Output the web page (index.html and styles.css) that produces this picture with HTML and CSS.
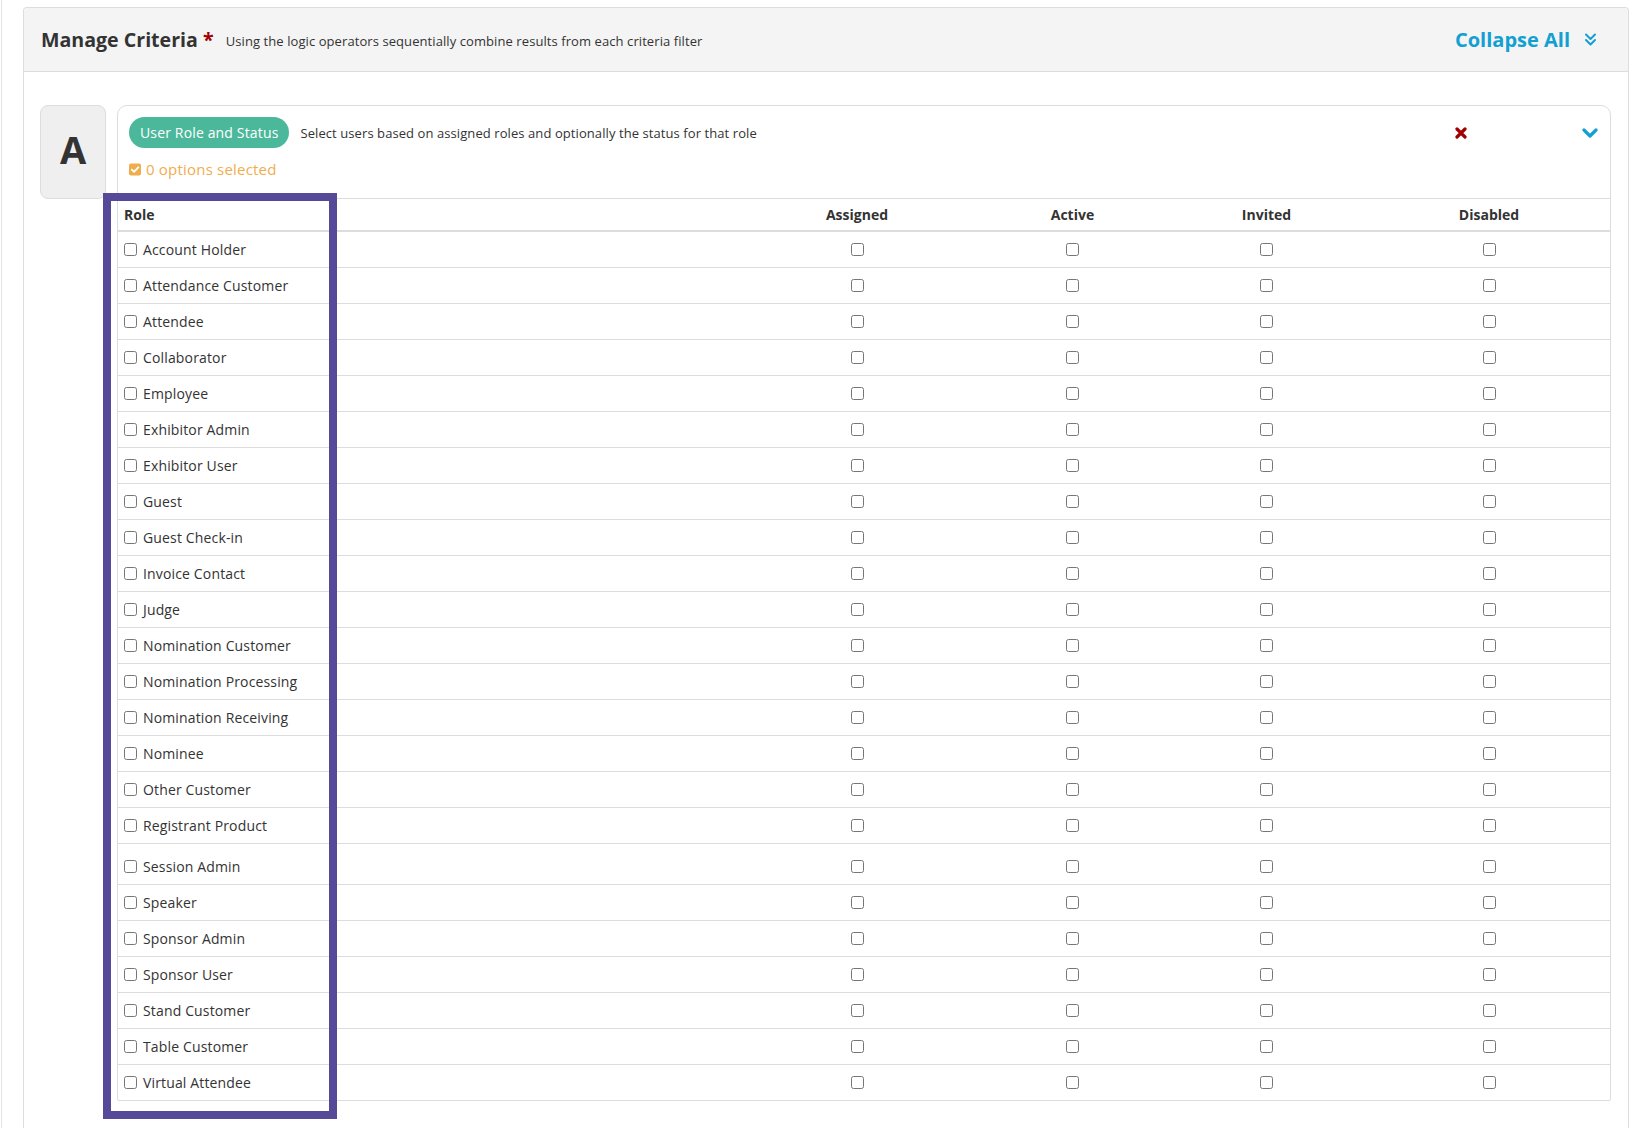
FILE: index.html
```html
<!DOCTYPE html>
<html lang="en">
  <head>
    <meta charset="UTF-8" />
    <meta name="viewport" content="width=device-width, initial-scale=1.0" />
    <title>Manage Criteria</title>
    <link rel="stylesheet" href="styles.css">
  </head>
  <body>
    <div class="frame">
      <div class="panel">
        <div class="panel-head">
          <h2 class="title">Manage Criteria <span class="req">*</span></h2>
          <span class="subtitle">Using the logic operators sequentially combine results from each criteria filter</span>
          <a class="collapse-all">Collapse All
            <svg width="13" height="13" viewBox="0 0 13 13"><path d="M2 1.5 L6.5 6 L11 1.5 M2 7 L6.5 11.5 L11 7" fill="none" stroke="#129fd2" stroke-width="2" stroke-linecap="round" stroke-linejoin="round"/></svg>
          </a>
        </div>

        <div class="panel-body">
          <div class="criteria">
            <div class="letter">A</div>
            <div class="card">
              <div class="card-head">
                <div class="card-top">
                  <span class="pill">User Role and Status</span>
                  <span class="desc">Select users based on assigned roles and optionally the status for that role</span>
                  <span class="remove">
                    <svg width="12" height="12" viewBox="0 0 12 12"><path d="M2 2 L10 10 M10 2 L2 10" stroke="#a10000" stroke-width="3.2" stroke-linecap="round"/></svg>
                  </span>
                  <span class="toggle">
                    <svg width="16" height="10" viewBox="0 0 16 10"><path d="M2 2 L8 8 L14 2" fill="none" stroke="#129fd2" stroke-width="3.2" stroke-linecap="round" stroke-linejoin="round"/></svg>
                  </span>
                </div>
                <div class="selected">
                  <svg width="12" height="13" viewBox="0 0 12 13"><rect x="0" y="0.5" width="12" height="12" rx="2" fill="#f0ad4e"/><path d="M2.8 6.6 L5 8.8 L9.3 4.3" fill="none" stroke="#fff" stroke-width="1.8" stroke-linecap="round" stroke-linejoin="round"/></svg>
                  0 options selected
                </div>
              </div>

              <table class="roles">
                <colgroup>
                  <col class="c-role"><col class="c-assigned"><col class="c-active"><col class="c-invited"><col class="c-disabled">
                </colgroup>
                <thead>
                  <tr><th class="left">Role</th><th>Assigned</th><th>Active</th><th>Invited</th><th>Disabled</th></tr>
                </thead>
                <tbody id="role-rows"></tbody>
              </table>

              <div class="highlight"></div>
            </div>
          </div>
        </div>
      </div>
    </div>

    <script>
      const roles = [
        "Account Holder", "Attendance Customer", "Attendee", "Collaborator", "Employee",
        "Exhibitor Admin", "Exhibitor User", "Guest", "Guest Check-in", "Invoice Contact",
        "Judge", "Nomination Customer", "Nomination Processing", "Nomination Receiving",
        "Nominee", "Other Customer", "Registrant Product", "Session Admin", "Speaker",
        "Sponsor Admin", "Sponsor User", "Stand Customer", "Table Customer", "Virtual Attendee"
      ];

      const tbody = document.getElementById("role-rows");
      roles.forEach(role => {
        const row = document.createElement("tr");
        if (role === "Session Admin") row.className = "tall";
        let html = `<td class="left"><label><input type="checkbox"> ${role}</label></td>`;
        for (let i = 0; i < 4; i++) {
          html += `<td><input type="checkbox"></td>`;
        }
        row.innerHTML = html;
        tbody.appendChild(row);
      });
    </script>
  </body>
</html>
```

FILE: styles.css
```css
body {
  margin: 0;
  font-family: "Open Sans", "Liberation Sans", sans-serif;
  color: #333;
  background-color: #fff;
}
.frame {
  margin-left: 1px;
  border-left: 1px solid #e4e4e4;
  min-height: 100vh;
  padding-top: 7px;
}
.panel {
  margin: 0 19px 0 21px;
  border: 1px solid #ddd;
  border-bottom: none;
  border-radius: 4px 4px 0 0;
}
.panel-head {
  display: flex;
  align-items: center;
  height: 63px;
  padding: 0 31px 0 17px;
  background-color: #f4f4f4;
  border-bottom: 1px solid #ddd;
  border-radius: 4px 4px 0 0;
}
.title {
  margin: 0;
  font-size: 19.6px;
  font-weight: 700;
  white-space: nowrap;
}
.req {
  color: #a30000;
}
.subtitle {
  font-size: 13px;
  margin: 3px 0 0 12px;
  letter-spacing: 0.08px;
}
.collapse-all {
  margin-left: auto;
  display: flex;
  align-items: center;
  gap: 14px;
  color: #129fd2;
  font-size: 20px;
  font-weight: 700;
  cursor: pointer;
}
.panel-body {
  padding: 33px 17px 60px 16px;
}
.criteria {
  display: flex;
  align-items: flex-start;
  gap: 11px;
}
.letter {
  flex: 0 0 66px;
  height: 94px;
  box-sizing: border-box;
  padding-bottom: 6px;
  display: flex;
  justify-content: center;
  align-items: center;
  background-color: #efefef;
  border: 1px solid #ddd;
  border-radius: 8px;
  font-size: 38px;
  font-weight: 700;
}
.card {
  position: relative;
  flex: 1;
  border: 1px solid #ddd;
  border-radius: 10px 10px 2px 2px;
}
.card-head {
  padding: 11px 12px 19px 11px;
  border-bottom: 1px solid #ddd;
}
.card-top {
  display: flex;
  align-items: center;
}
.pill {
  height: 31px;
  box-sizing: border-box;
  padding: 6px 11px;
  border-radius: 16px;
  background-color: #4cb89b;
  color: #fff;
  font-size: 14px;
  line-height: 19px;
  letter-spacing: 0.15px;
}
.desc {
  font-size: 13px;
  margin-left: 11px;
  letter-spacing: 0.08px;
}
.remove {
  margin-left: auto;
  margin-right: 115px;
  display: flex;
}
.toggle {
  display: flex;
  cursor: pointer;
}
.selected {
  display: flex;
  align-items: center;
  gap: 5px;
  margin-top: 11px;
  height: 20px;
  color: #f0ad4e;
  font-size: 15px;
  letter-spacing: 0.2px;
}
.roles {
  width: 100%;
  table-layout: fixed;
  border-collapse: collapse;
  font-size: 14px;
}
.c-role { width: 616px; }
.c-assigned { width: 246px; }
.c-active { width: 185px; }
.c-invited { width: 203px; }
.c-disabled { width: 242px; }
.roles th {
  padding: 6px;
  line-height: 19px;
  font-weight: 700;
  text-align: center;
  border-bottom: 2px solid #ddd;
}
.roles td {
  padding: 8px 6px;
  text-align: center;
  border-bottom: 1px solid #ddd;
}
.roles tr:last-child td {
  border-bottom: none;
}
.roles tr.tall td {
  padding-top: 12.5px;
  padding-bottom: 8.5px;
}
.roles .left {
  text-align: left;
}
.roles label {
  display: flex;
  align-items: center;
  gap: 6px;
  letter-spacing: 0.15px;
}
.roles input {
  display: block;
  width: 13px;
  height: 13px;
  margin: 0 auto;
}
.roles label input {
  margin: 0;
}
.highlight {
  position: absolute;
  top: 87px;
  left: -15px;
  width: 234px;
  height: 926px;
  box-sizing: border-box;
  border: 8px solid #564a98;
  pointer-events: none;
}
```
